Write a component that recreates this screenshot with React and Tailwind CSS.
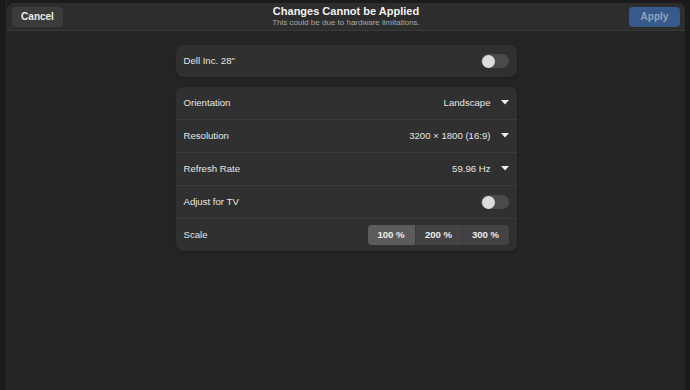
import { useState } from 'react';

const font = { fontFamily: '"Liberation Sans", Arial, sans-serif' };

function Toggle({ on = false }) {
    return (
        <div className="w-[28px] h-[14px] rounded-full bg-[#4a4a4a] flex items-center px-[1px]">
            <div className={`w-[13px] h-[13px] rounded-full bg-[#dcdcdc] ${on ? 'ml-auto' : ''}`} />
        </div>
    );
}

function Caret() {
    return (
        <svg width="8" height="5" viewBox="0 0 8 5" className="ml-[10px]">
            <path d="M0 0 L8 0 L4 4.5 Z" fill="#ececec" />
        </svg>
    );
}

function Row({ label, children, last }) {
    return (
        <div className={`flex items-center justify-between pl-[8px] pr-[8px] ${last ? 'h-[32px]' : 'h-[33px] border-b border-[#3b3b3b]'}`}>
            <span className="text-[9.6px] text-[#e6e6e6]">{label}</span>
            {children}
        </div>
    );
}

export default function App() {
    const [scale, setScale] = useState('100 %');

    return (
        <div className="w-[690px] h-[390px] bg-[#1b1b1b] flex overflow-hidden" style={font}>
            <div className="w-[7px] shrink-0 border-r border-[#2a2a2a]" />
            <div className="flex-1 mt-[3px] flex flex-col rounded-t-[7px] overflow-hidden bg-[#242424]">
                {/* Header bar */}
                <div className="h-[28px] shrink-0 bg-[#2d2d2d] border-b border-[#3a3a3a] flex items-center justify-between px-[5px]">
                    <button className="w-[51px] h-[20px] rounded-[4px] bg-[#3b3b3b] text-[10px] font-bold text-[#ececec]">
                        Cancel
                    </button>
                    <div className="flex flex-col items-center leading-none">
                        <span className="text-[11px] font-bold text-[#f2f2f2]">Changes Cannot be Applied</span>
                        <span className="text-[8px] text-[#a8a8a8] mt-[2px]">This could be due to hardware limitations.</span>
                    </div>
                    <button className="w-[51px] h-[20px] rounded-[4px] bg-[#37598c] text-[10px] font-bold text-[#94a4bc]">
                        Apply
                    </button>
                </div>

                {/* Content */}
                <div className="flex-1 flex flex-col items-center pt-[14px]">
                    <div className="w-[341px] h-[32px] rounded-[7px] bg-[#303030] flex items-center justify-between pl-[8px] pr-[8px] shadow-[0_1px_2px_rgba(0,0,0,0.3)]">
                        <span className="text-[9.6px] text-[#e6e6e6]">Dell Inc. 28"</span>
                        <Toggle />
                    </div>

                    <div className="w-[341px] mt-[10px] rounded-[7px] bg-[#303030] flex flex-col shadow-[0_1px_2px_rgba(0,0,0,0.3)]">
                        <Row label="Orientation">
                            <div className="flex items-center text-[9.6px] text-[#e6e6e6]">
                                Landscape <Caret />
                            </div>
                        </Row>
                        <Row label="Resolution">
                            <div className="flex items-center text-[9.6px] text-[#e6e6e6]">
                                3200 × 1800 (16:9) <Caret />
                            </div>
                        </Row>
                        <Row label="Refresh Rate">
                            <div className="flex items-center text-[9.6px] text-[#e6e6e6]">
                                59.96 Hz <Caret />
                            </div>
                        </Row>
                        <Row label="Adjust for TV">
                            <Toggle />
                        </Row>
                        <Row label="Scale" last>
                            <div className="flex h-[20px] rounded-[4px] bg-[#434343] overflow-hidden">
                                {['100 %', '200 %', '300 %'].map((s, i) => (
                                    <button
                                        key={s}
                                        onClick={() => setScale(s)}
                                        className={`w-[47px] h-full text-[9.6px] font-bold text-[#ececec] ${scale === s ? 'bg-[#5c5c5c]' : ''} ${i > 0 ? 'border-l border-[#3a3a3a]' : ''}`}
                                    >
                                        {s}
                                    </button>
                                ))}
                            </div>
                        </Row>
                    </div>
                </div>
            </div>
            <div className="w-[5px] shrink-0" />
        </div>
    );
}
